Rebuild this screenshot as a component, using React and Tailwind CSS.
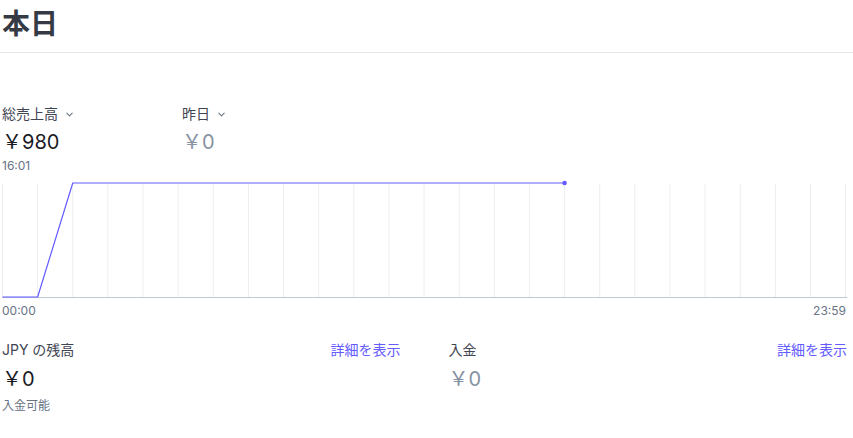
import React from "react";

const font = { fontFamily: 'Inter, "Noto Sans CJK JP", sans-serif' };

const Chevron = () => (
  <svg width="9" height="9" viewBox="0 0 10 10" className="ml-[7px] mt-[1px]">
    <polyline
      points="2,3.5 5,6.5 8,3.5"
      fill="none"
      stroke="#6c7688"
      strokeWidth="1.2"
      strokeLinecap="round"
      strokeLinejoin="round"
    />
  </svg>
);

const Chart = () => {
  const step = 35.13;
  const lines = Array.from({ length: 25 }, (_, i) => 0.5 + i * step);
  const top = 5;
  const base = 119;
  return (
    <svg width="845" height="122" viewBox="0 0 845 122" className="block">
      {lines.map((x) => (
        <line key={x} x1={x} x2={x} y1={top + 1} y2={base} stroke="#ebeef1" strokeWidth="1" />
      ))}
      <line x1="0" x2="845" y1={base + 0.5} y2={base + 0.5} stroke="#c0c8d2" strokeWidth="1" />
      <polyline
        points={`0.5,${base} ${lines[1]},${base} ${lines[2]},${top} ${lines[16]},${top}`}
        fill="none"
        stroke="#635bff"
        strokeWidth="1.2"
        strokeLinejoin="round"
      />
      <circle cx={lines[16]} cy={top} r="2.3" fill="#635bff" />
    </svg>
  );
};

const Metric = ({ label, value, muted, chevron }) => (
  <div className="flex flex-col">
    <div className="flex items-center text-[14px] leading-[20px] text-[#414552]">
      {label}
      {chevron && <Chevron />}
    </div>
    <div
      className={`mt-[4px] text-[20px] leading-[28px] ${
        muted ? "text-[#8792a2]" : "text-[#1a1b25]"
      }`}
    >
      {value}
    </div>
  </div>
);

const Balance = ({ label, value, muted, note }) => (
  <div className="flex flex-col">
    <div className="flex items-center justify-between text-[14px] leading-[20px]">
      <span className="text-[#414552]">{label}</span>
      <a className="text-[#635bff]">詳細を表示</a>
    </div>
    <div
      className={`mt-[5px] text-[20px] leading-[28px] ${
        muted ? "text-[#8792a2]" : "text-[#1a1b25]"
      }`}
    >
      {value}
    </div>
    {note && <div className="mt-[5px] text-[12px] leading-[16px] text-[#687385]">{note}</div>}
  </div>
);

export default function App() {
  return (
    <div className="w-[853px] h-[438px] bg-white overflow-hidden" style={font}>
      <div className="pl-[2px] pt-[6px] pb-[10px] border-b border-[#e3e6ea]">
        <h1 className="text-[28px] leading-[36px] font-bold text-[#353a44]">本日</h1>
      </div>

      <div className="pl-[2px] w-[847px]">
        <div className="mt-[51px] flex">
          <div className="w-[180px]">
            <Metric label="総売上高" value="￥980" chevron />
          </div>
          <Metric label="昨日" value="￥0" muted chevron />
        </div>
        <div className="mt-[2px] text-[12px] leading-[16px] text-[#687385]">16:01</div>

        <div className="mt-[4px]">
          <Chart />
        </div>
        <div className="mt-[3px] flex justify-between text-[12px] leading-[16px] text-[#687385]">
          <span>00:00</span>
          <span className="pr-[1px]">23:59</span>
        </div>

        <div className="mt-[21px] grid grid-cols-2 gap-12 w-[845px]">
          <Balance label="JPY の残高" value="￥0" note="入金可能" />
          <Balance label="入金" value="￥0" muted />
        </div>
      </div>
    </div>
  );
}
